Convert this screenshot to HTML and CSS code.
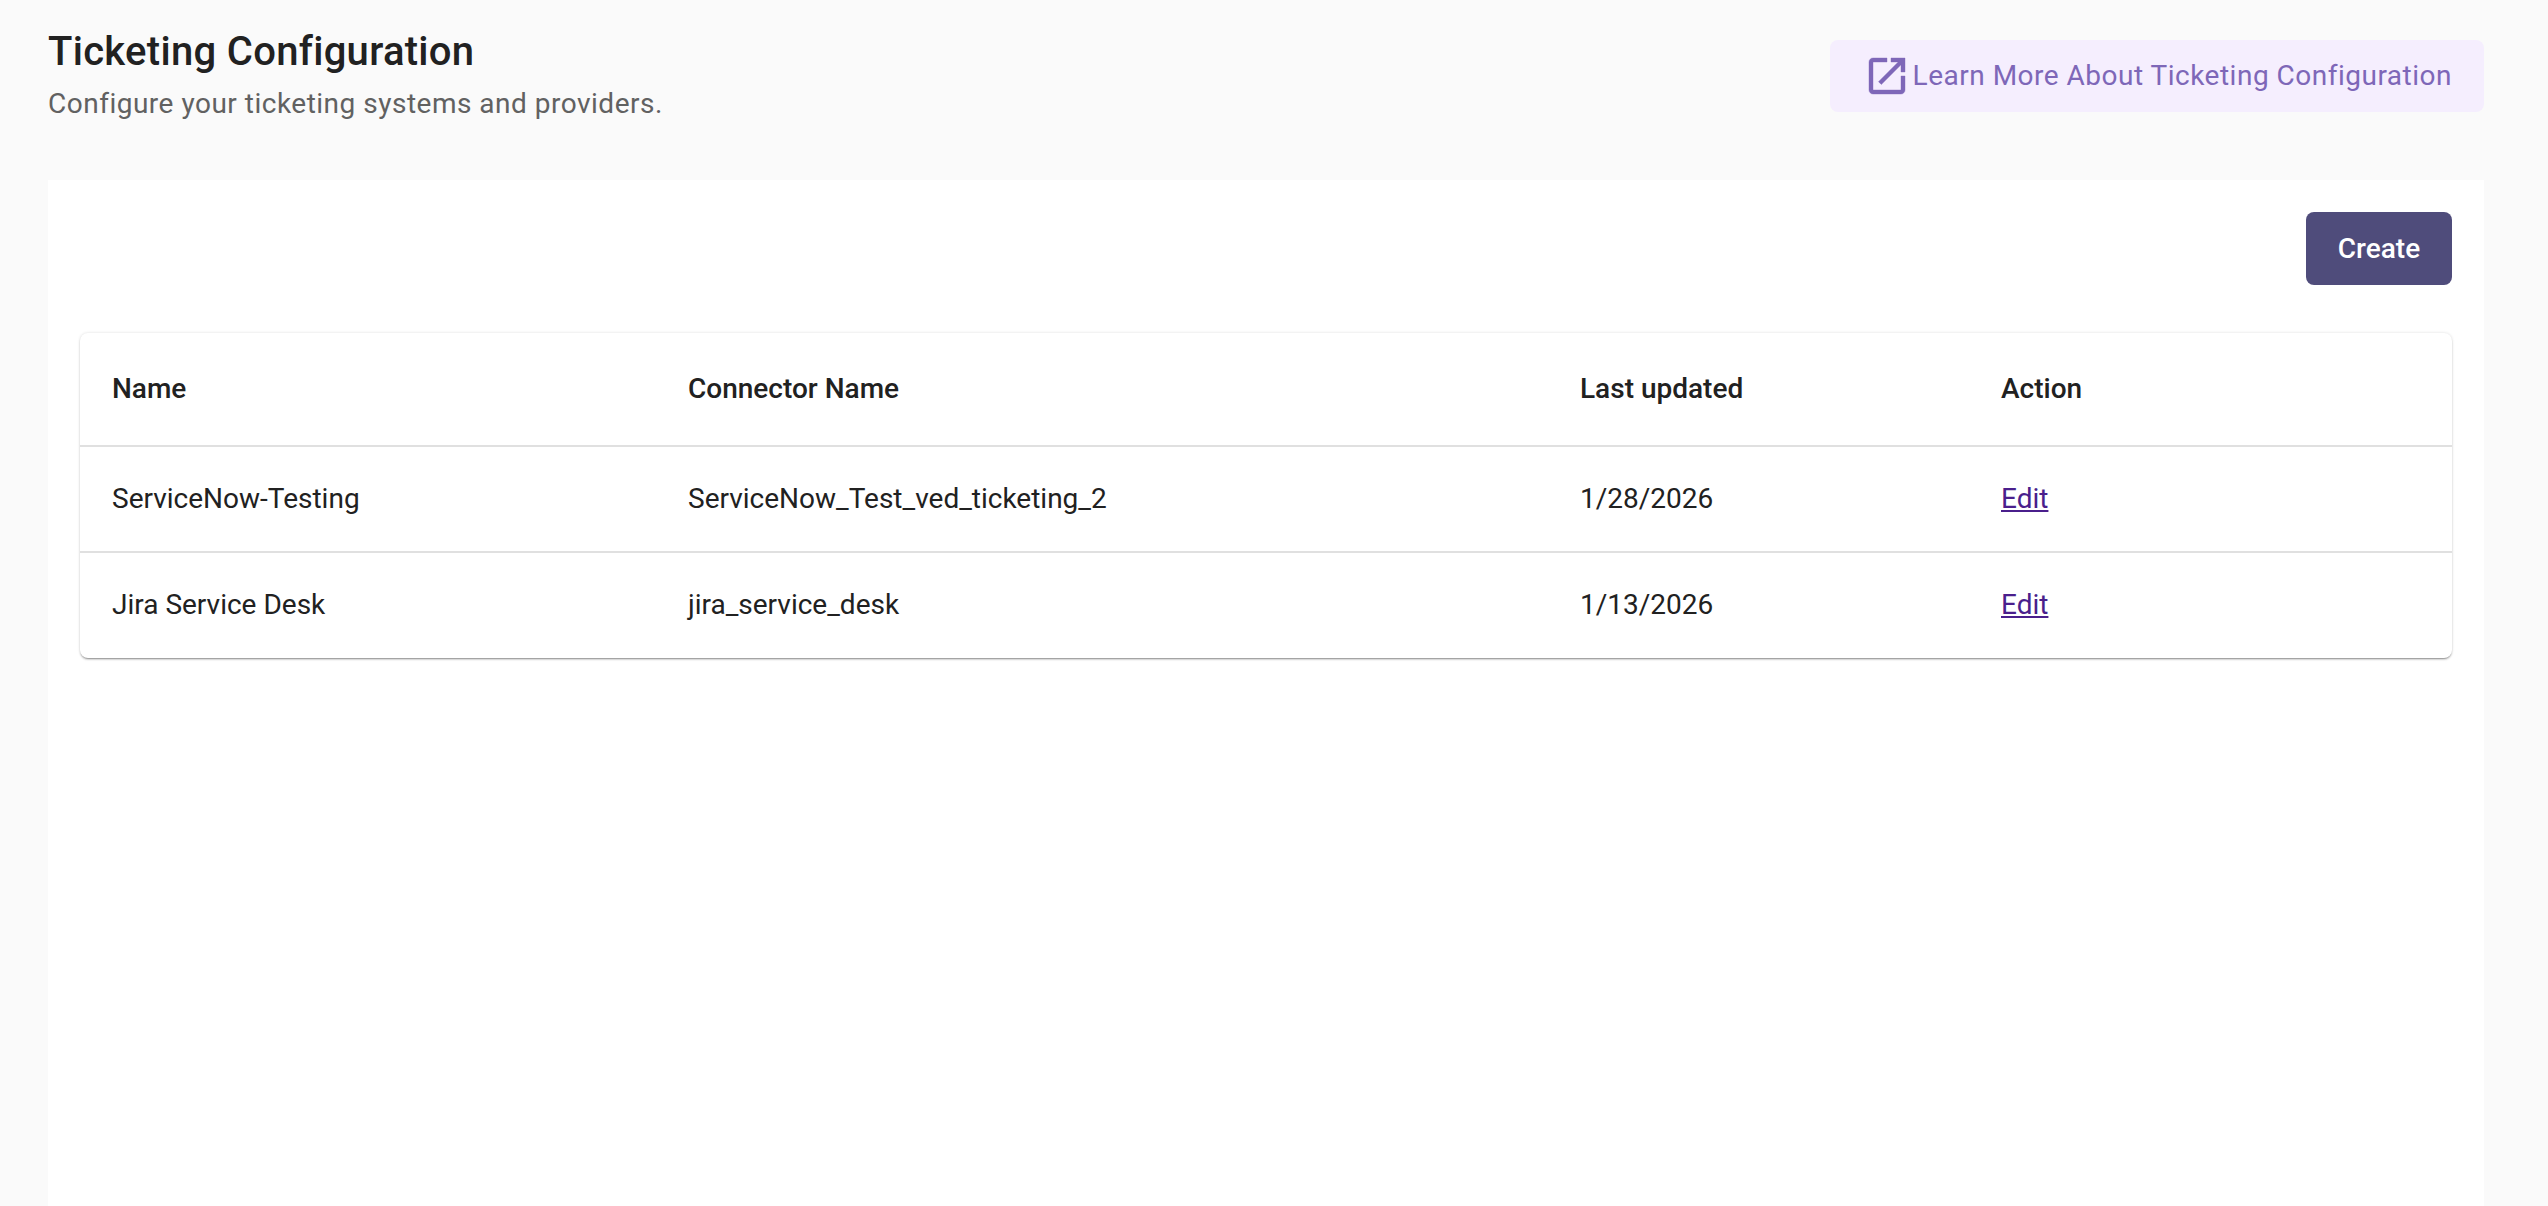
FILE: index.html
```html
<!DOCTYPE html>
<html lang="en">
<head>
<meta charset="utf-8">
<title>Ticketing Configuration</title>
<link rel="stylesheet" href="styles.css">
</head>
<body>
<div class="page">
  <header class="page-header">
    <div class="heading">
      <h1 class="title">Ticketing Configuration</h1>
      <p class="subtitle">Configure your ticketing systems and providers.</p>
    </div>
    <a class="learn-more" href="#">
      <svg class="learn-icon" viewBox="0 0 24 24" aria-hidden="true"><path d="M19 19H5V5h7V3H5c-1.11 0-2 .9-2 2v14c0 1.1.89 2 2 2h14c1.1 0 2-.9 2-2v-7h-2v7zM14 3v2h3.59l-9.83 9.83 1.41 1.41L19 6.41V10h2V3h-7z"/></svg>
      <span class="learn-text">Learn More About Ticketing Configuration</span>
    </a>
  </header>
  <main class="panel">
    <div class="toolbar"><button class="create" type="button">Create</button></div>
    <div class="table-card">
      <table class="table">
        <colgroup><col class="col-name"><col class="col-connector"><col class="col-updated"><col class="col-action"></colgroup>
        <thead>
          <tr><th>Name</th><th>Connector Name</th><th>Last updated</th><th>Action</th></tr>
        </thead>
        <tbody>
          <tr><td>ServiceNow-Testing</td><td>ServiceNow_Test_ved_ticketing_2</td><td>1/28/2026</td><td><a class="edit" href="#">Edit</a></td></tr>
          <tr><td>Jira Service Desk</td><td>jira_service_desk</td><td>1/13/2026</td><td><a class="edit" href="#">Edit</a></td></tr>
        </tbody>
      </table>
    </div>
  </main>
</div>
</body>
</html>
```
FILE: styles.css
```css
* { box-sizing: border-box; }
html, body { margin: 0; height: 100%; overflow: hidden; }
body { background: #fafafa; font-family: Roboto, "Liberation Sans", sans-serif; color: #212121; }
.page { height: 1206px; padding: 25px 64px 0 48px; display: flex; flex-direction: column; }
.page-header { height: 155px; display: flex; justify-content: space-between; align-items: flex-start; }
.title { margin: 0 0 6px; font-size: 40px; line-height: 54px; font-weight: 500; letter-spacing: 0.3px; color: #212121; }
.subtitle { margin: 0; font-size: 28px; line-height: 38px; font-weight: 400; letter-spacing: 0.5px; color: #616161; }
.learn-more { margin-top: 15px; height: 72px; padding: 0 32px 0 33px; display: flex; align-items: center; gap: 2px; border-radius: 8px; background: #f5eefe; color: #7e67b8; font-size: 28px; letter-spacing: 0.5px; text-decoration: none; }
.learn-text { padding-bottom: 2px; }
.learn-icon { width: 48px; height: 48px; fill: currentColor; stroke: currentColor; stroke-width: 0.2; flex: none; }
.panel { flex: 1; background: #fff; padding: 32px; }
.toolbar { display: flex; justify-content: flex-end; margin-bottom: 48px; }
.create { height: 73px; width: 146px; border: 0; border-radius: 8px; background: #4f4c7b; color: #fff; font: 500 28px Roboto, sans-serif; }
.table-card { background: #fff; border-radius: 8px; box-shadow: 0 2px 1px -1px rgba(0,0,0,.24), 0 2px 2px rgba(0,0,0,.14), 0 0 3px rgba(0,0,0,.14); overflow: hidden; }
.table { width: 100%; border-collapse: collapse; table-layout: fixed; font-size: 28px; }
.col-name { width: 576px; }
.col-connector { width: 892px; }
.col-updated { width: 421px; }
th, td { padding: 0 32px 2px; text-align: left; color: #212121; }
th { height: 113px; font-weight: 500; border-bottom: 2px solid #e0e0e0; }
td { height: 106px; font-weight: 400; }
tbody tr:first-child td { border-bottom: 2px solid #e0e0e0; }
.edit { color: #4a1f8c; text-decoration: underline; }
```
